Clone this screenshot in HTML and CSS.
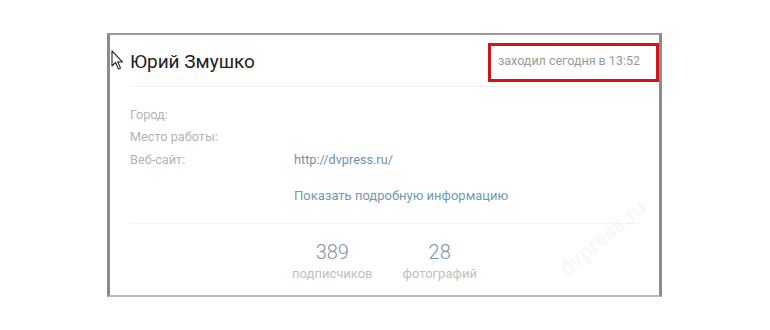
FILE: index.html
```html
<!DOCTYPE html>
<html lang="ru">
<head>
    <meta charset="UTF-8">
    <link rel="stylesheet" href="styles.css">
</head>
<body>
    <div class="frame">
        <div class="page-header">
            <svg class="cursor" width="14" height="20" viewBox="0 0 14 20">
                <path d="M1 1 L1 16 L4.5 12.5 L7.5 19 L9.5 18 L6.7 11.8 L11.5 11.8 Z" fill="#fff" stroke="#333" stroke-width="1.2" stroke-linejoin="round"/>
            </svg>
            <h2 class="page-name">Юрий Змушко</h2>
            <div class="online">заходил сегодня в 13:52</div>
            <div class="highlight"></div>
        </div>

        <div class="info">
            <div class="info-row">
                <div class="info-label">Город:</div>
                <div class="info-value"></div>
            </div>
            <div class="info-row">
                <div class="info-label">Место работы:</div>
                <div class="info-value"></div>
            </div>
            <div class="info-row">
                <div class="info-label">Веб-сайт:</div>
                <div class="info-value"><a href="#">http://dvpress.ru/</a></div>
            </div>
            <div class="info-more"><a href="#">Показать подробную информацию</a></div>
        </div>

        <div class="counts">
            <div class="count">
                <div class="count-num">389</div>
                <div class="count-label">подписчиков</div>
            </div>
            <div class="count">
                <div class="count-num">28</div>
                <div class="count-label">фотографий</div>
            </div>
        </div>

        <div class="watermark">dvpress.ru</div>
    </div>
</body>
</html>
```

FILE: styles.css
```css
* {
    margin: 0;
    padding: 0;
    box-sizing: border-box;
}

body {
    font-family: Roboto, 'Liberation Sans', sans-serif;
    background: #fff;
    padding: 33px 0 0 107px;
}

a {
    color: inherit;
    text-decoration: none;
}

.frame {
    position: relative;
    width: 555px;
    height: 264px;
    border-top: 2px solid #9a9a9a;
    border-left: 3px solid #8c8c8c;
    border-right: 3px solid #8c8c8c;
    border-bottom: 2px solid #b8b8b8;
    overflow: hidden;
}

.page-header {
    position: relative;
    display: flex;
    align-items: center;
    height: 52px;
    margin: 0 17px 0 20px;
    border-bottom: 1px solid #f0f0f0;
}

.cursor {
    position: absolute;
    left: -19px;
    top: 15px;
}

.page-name {
    flex: 1;
    font-size: 19px;
    font-weight: 400;
    color: #222;
    padding-top: 1px;
}

.online {
    font-size: 12.5px;
    color: #9a9a9a;
    margin-right: 2px;
}

.highlight {
    position: absolute;
    right: -17px;
    top: 8px;
    width: 171px;
    height: 39px;
    border: 3px solid #d3121c;
}

.info {
    padding: 16px 0 0 20px;
}

.info-row {
    display: flex;
    height: 22.5px;
    align-items: center;
    font-size: 12.7px;
}

.info-label {
    width: 164px;
    color: #b4b4b4;
}

.info-value {
    color: #6d93b0;
}

.info-more {
    margin: 17px 0 0 164px;
    font-size: 13px;
    color: #6f99b3;
}

.counts {
    display: flex;
    justify-content: center;
    gap: 30px;
    margin: 20px 20px 0;
    padding-top: 16px;
    border-top: 1px solid #f5f5f5;
}

.count {
    text-align: center;
}

.count-num {
    font-size: 20px;
    font-weight: 300;
    color: #7f93a6;
    line-height: 24px;
}

.count-label {
    font-size: 13px;
    color: #c0c0c0;
    line-height: 20px;
}

.watermark {
    position: absolute;
    left: 440px;
    top: 190px;
    font-size: 22px;
    font-weight: 700;
    color: #000;
    opacity: 0.025;
    transform: rotate(-40deg);
}
```
